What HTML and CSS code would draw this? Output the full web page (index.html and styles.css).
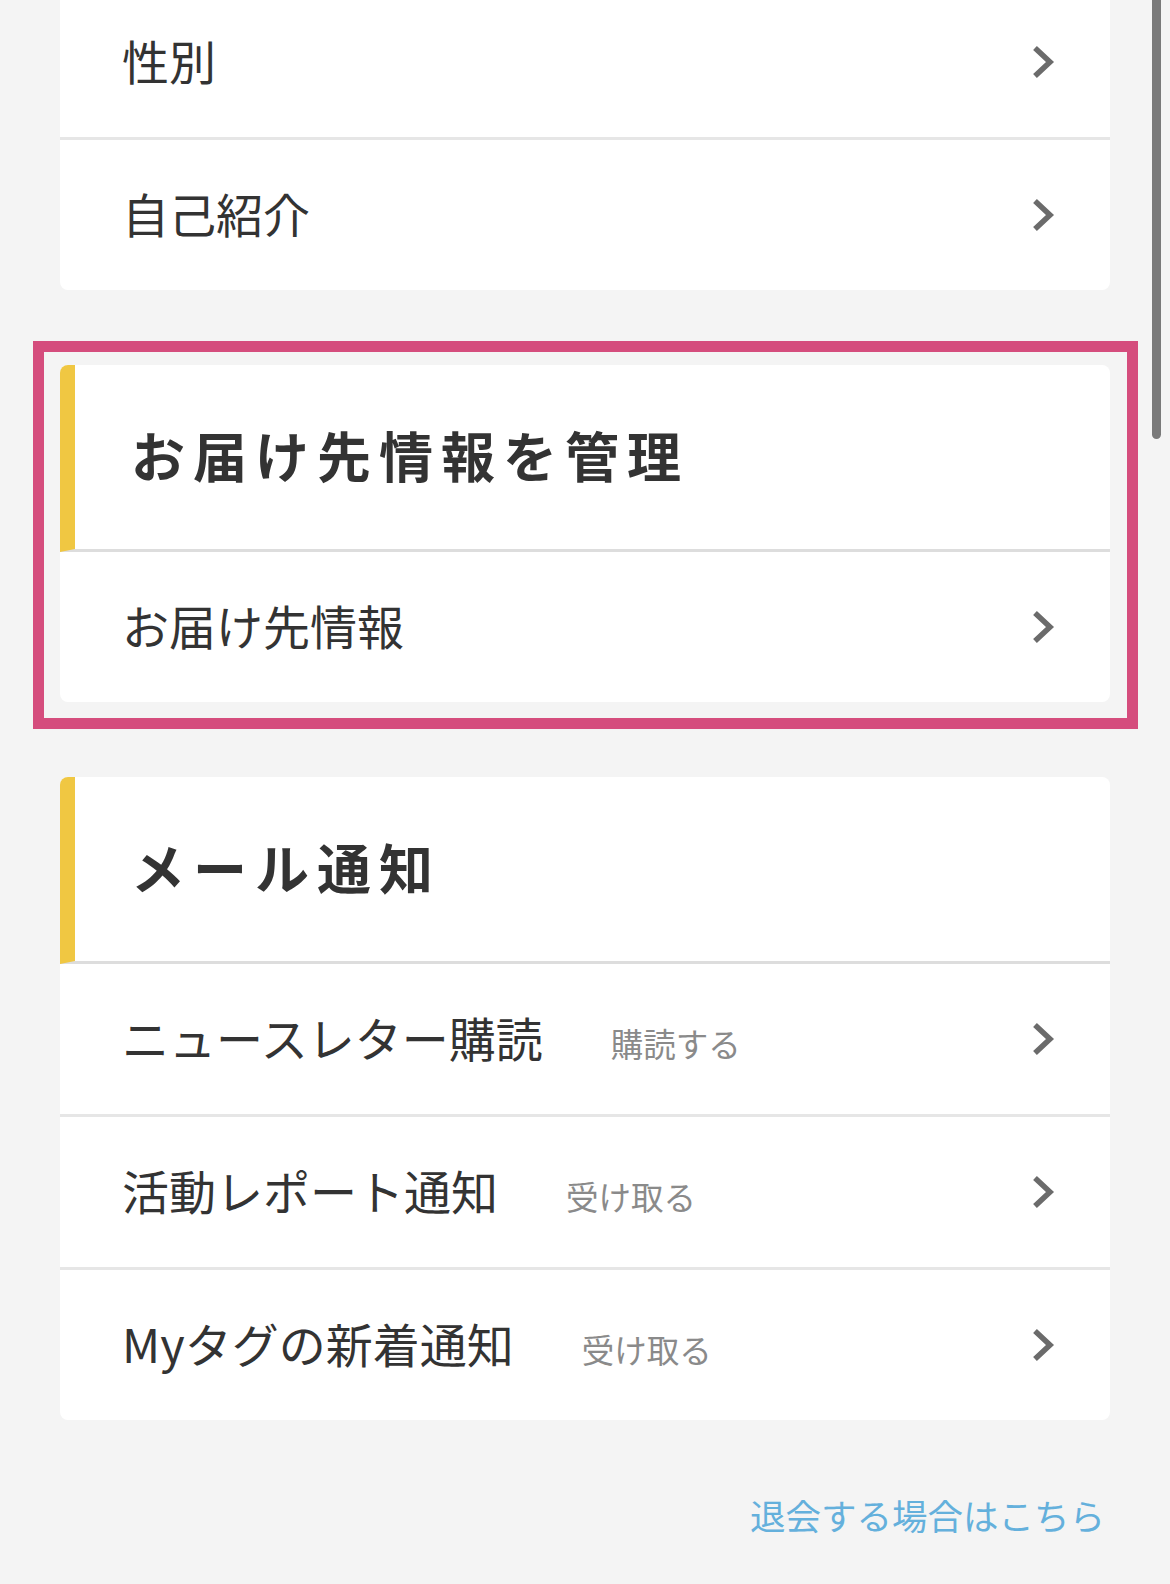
FILE: index.html
```html
<!DOCTYPE html>
<html lang="ja">
<head>
    <meta charset="UTF-8">
    <meta name="viewport" content="width=device-width, initial-scale=1.0">
    <title>アカウント設定</title>
    <link rel="stylesheet" href="styles.css">
</head>
<body>
    <div class="scrollbar" aria-hidden="true"></div>
    <main class="page">
        <section class="card card-first">
            <a class="row" href="#">
                <span class="row-text"><span class="row-label">性別</span></span>
                <svg class="chevron" viewBox="0 0 24 36" aria-hidden="true"><polyline points="4,4 19,18 4,32"/></svg>
            </a>
            <a class="row" href="#">
                <span class="row-text"><span class="row-label">自己紹介</span></span>
                <svg class="chevron" viewBox="0 0 24 36" aria-hidden="true"><polyline points="4,4 19,18 4,32"/></svg>
            </a>
        </section>

        <div class="highlight">
            <section class="card">
                <h2 class="card-head">お届け先情報を管理</h2>
                <a class="row" href="#">
                    <span class="row-text"><span class="row-label">お届け先情報</span></span>
                    <svg class="chevron" viewBox="0 0 24 36" aria-hidden="true"><polyline points="4,4 19,18 4,32"/></svg>
                </a>
            </section>
        </div>

        <section class="card card-mail">
            <h2 class="card-head">メール通知</h2>
            <a class="row" href="#">
                <span class="row-text"><span class="row-label">ニュースレター購読</span><span class="row-value">購読する</span></span>
                <svg class="chevron" viewBox="0 0 24 36" aria-hidden="true"><polyline points="4,4 19,18 4,32"/></svg>
            </a>
            <a class="row" href="#">
                <span class="row-text"><span class="row-label">活動レポート通知</span><span class="row-value">受け取る</span></span>
                <svg class="chevron" viewBox="0 0 24 36" aria-hidden="true"><polyline points="4,4 19,18 4,32"/></svg>
            </a>
            <a class="row" href="#">
                <span class="row-text"><span class="row-label">Myタグの新着通知</span><span class="row-value">受け取る</span></span>
                <svg class="chevron" viewBox="0 0 24 36" aria-hidden="true"><polyline points="4,4 19,18 4,32"/></svg>
            </a>
        </section>

        <div class="leave">
            <a class="leave-link" href="#">退会する場合はこちら</a>
        </div>
    </main>
</body>
</html>
```

FILE: styles.css
```css
:root {
    --bg-color: #f4f4f4;
    --card-bg: #ffffff;
    --text-color: #333333;
    --sub-text: #8a8a8a;
    --row-border: #e6e6e6;
    --head-border: #dddddd;
    --accent: #f0c742;
    --highlight: #d54d7d;
    --link-color: #64b0dc;
    --chevron: #6b6b6b;
}
body {
    font-family: "Noto Sans CJK JP", "Noto Sans", sans-serif;
    margin: 0;
    padding: 0;
    background-color: var(--bg-color);
    color: var(--text-color);
    overflow: hidden;
}
.page {
    padding: 0 60px;
}
.card {
    background-color: var(--card-bg);
    border-radius: 8px;
    overflow: hidden;
}
.card-first {
    margin-top: -13px;
}
.card-mail {
    margin-top: 48px;
}
.highlight {
    margin: 51px -28px 0 -27px;
    padding: 13px 17px 16px 16px;
    border: 11px solid var(--highlight);
}
.card-head {
    display: flex;
    align-items: center;
    height: 180px;
    margin: 0;
    padding: 0 0 4px 56px;
    border-left: 15px solid var(--accent);
    border-bottom: 3px solid var(--head-border);
    font-size: 54px;
    font-weight: 700;
    letter-spacing: 8px;
    line-height: 1.3;
}
.row {
    display: flex;
    align-items: center;
    height: 145px;
    padding: 0 55px 5px 62px;
    color: var(--text-color);
    text-decoration: none;
}
.row + .row {
    border-top: 3px solid var(--row-border);
}
.row-text {
    flex: 1;
    display: flex;
    align-items: baseline;
    line-height: 1.4;
}
.row-label {
    font-size: 47px;
}
.row-value {
    margin-left: 68px;
    font-size: 32.5px;
    color: var(--sub-text);
}
.chevron {
    width: 24px;
    height: 36px;
    flex-shrink: 0;
    margin-top: 5px;
}
.chevron polyline {
    fill: none;
    stroke: var(--chevron);
    stroke-width: 5.5;
}
.leave {
    margin-top: 68px;
    padding-right: 5px;
    text-align: right;
}
.leave-link {
    font-size: 35.5px;
    line-height: 1.5;
    color: var(--link-color);
    text-decoration: none;
}
.scrollbar {
    position: absolute;
    top: -20px;
    left: 1152px;
    width: 9px;
    height: 459px;
    border-radius: 5px;
    background-color: #7a7a7a;
}
```
